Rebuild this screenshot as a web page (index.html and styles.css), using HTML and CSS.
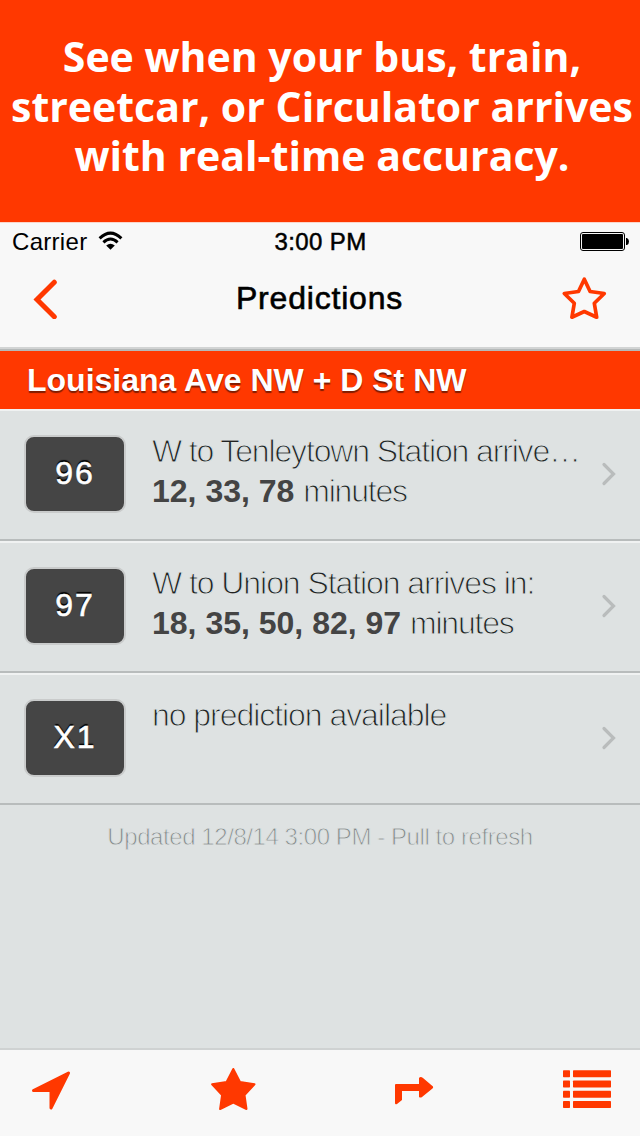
FILE: index.html
```html
<!DOCTYPE html>
<html lang="en">
<head>
<meta charset="utf-8">
<title>Predictions</title>
<link rel="stylesheet" href="styles.css">
</head>
<body>
<div class="screen">
  <header class="promo">See when your bus, train,<br>streetcar, or Circulator arrives<br>with real-time accuracy.</header>
  <div class="status">
    <div class="carrier"><span>Carrier</span>
      <svg width="26" height="20" viewBox="98 231 26 20"><g fill="none" stroke="#000" stroke-width="3"><path d="M99.600 238.300Q110.500 227.900 121.400 238.300"/><path d="M103.400 242.300Q110.500 235.700 117.600 242.300"/></g><path d="M106.200 245.500Q110.500 241.900 114.800 245.500L110.500 249.800Z"/></svg>
    </div>
    <div class="time">3:00 PM</div>
    <svg class="battery" width="50" height="20" viewBox="579 231 50 20"><rect x="580.500" y="232.500" width="44" height="18" rx="2.500" fill="none" stroke="#000"/><rect x="582" y="234" width="41" height="15" rx="1"/><path d="M626 238h1q2 1 2 3.500t-2 3.500h-1z"/></svg>
  </div>
  <nav class="nav">
    <svg width="24" height="40" viewBox="33 279 24 40"><path d="M54.300 282.200L37 299.500L54.300 316.800" fill="none" stroke="#ff3800" stroke-width="5" stroke-linecap="round"/></svg>
    <h1>Predictions</h1>
    <svg class="outline-star" width="46" height="46" viewBox="561 275 46 46"><path d="M584.300 279.200L590.100 291.500L604.300 293.500L594.300 303.300L596.700 317.200L584.300 311.500L571.900 317.200L574.300 303.300L564.300 293.500L578.500 291.500Z" fill="none" stroke="#ff3800" stroke-width="3.700" stroke-linejoin="round"/></svg>
  </nav>
  <h2 class="stop">Louisiana Ave NW + D St NW</h2>
  <main class="list">
    <section class="row">
      <div class="badge">96</div>
      <div class="info"><p class="thin first">W to Tenleytown Station arrive…</p><p><b>12, 33, 78</b> <span class="thin minutes">minutes</span></p></div>
      <svg class="chevron" width="16" height="24" viewBox="0 0 16 24"><path d="M3 2.500L12.500 12L3 21.500"/></svg>
    </section>
    <section class="row">
      <div class="badge">97</div>
      <div class="info"><p class="thin second">W to Union Station arrives in:</p><p><b>18, 35, 50, 82, 97</b> <span class="thin minutes">minutes</span></p></div>
      <svg class="chevron" width="16" height="24" viewBox="0 0 16 24"><path d="M3 2.500L12.500 12L3 21.500"/></svg>
    </section>
    <section class="row">
      <div class="badge">X1</div>
      <div class="info"><p class="thin third">no prediction available</p></div>
      <svg class="chevron" width="16" height="24" viewBox="0 0 16 24"><path d="M3 2.500L12.500 12L3 21.500"/></svg>
    </section>
    <p class="updated">Updated 12/8/14 3:00 PM - Pull to refresh</p>
  </main>
  <footer class="tabs">
    <svg width="40" height="40" viewBox="31 1072 40 40"><path d="M33.500 1092.500L68.500 1075L51 1110V1092.500Z" fill="#ff3800" stroke="#ff3800" stroke-width="3" stroke-linejoin="round"/></svg>
    <svg class="favorite" width="46" height="46" viewBox="210 1066 46 46"><path d="M233.300 1069L240 1082L254.500 1084.300L244.500 1095L246.500 1109L233.300 1102.600L220.100 1109L222.100 1095L212.100 1084.300L226.600 1082Z" fill="#ff3800" stroke="#ff3800" stroke-width="2" stroke-linejoin="round"/></svg>
    <svg class="directions" width="40" height="30" viewBox="394 1076 40 30"><path d="M396 1084H419V1078Q420.500 1076 423 1078L433 1086.500Q433.500 1087.500 432.500 1088.500L422 1097Q420.500 1098 419 1097V1091H402V1100L397 1104Q395 1105 395 1103V1085Q395 1084 396 1084Z" fill="#ff3800"/></svg>
    <svg class="menu" width="48" height="38" viewBox="563 1070 48 38"><g fill="#ff3800"><rect x="563" y="1070.200" width="7" height="7" rx=".7"/><rect x="573" y="1070.200" width="38" height="7" rx=".7"/><rect x="563" y="1080.500" width="7" height="7" rx=".7"/><rect x="573" y="1080.500" width="38" height="7" rx=".7"/><rect x="563" y="1090.800" width="7" height="7" rx=".7"/><rect x="573" y="1090.800" width="38" height="7" rx=".7"/><rect x="563" y="1101" width="7" height="7" rx=".7"/><rect x="573" y="1101" width="38" height="7" rx=".7"/></g></svg>
  </footer>
</div>
</body>
</html>
```
FILE: styles.css
```css
* { box-sizing: border-box; margin: 0; }
svg { display: block; flex: none; }
body { font-family: "Liberation Sans", Arial, sans-serif; color: #000; }
.screen { width: 640px; height: 1136px; display: flex; flex-direction: column; background: #dee2e2; overflow: hidden; white-space: nowrap; }
.promo { height: 222px; padding: 32px 0 0 4px; background: #ff3800; color: #fff; font: bold 41px/49.5px "Open Sans", sans-serif; text-align: center; }
.status { height: 38px; padding: 0 11px 0 12px; display: grid; grid-template-columns: 1fr auto 1fr; align-items: center; background: #f8f8f8; border-top: 1px solid #fbd5ca; font-size: 24px; line-height: 34px; }
.carrier { display: flex; align-items: center; gap: 11px; letter-spacing: .3px; }
.carrier svg { margin-top: -2px; }
.time { letter-spacing: .4px; -webkit-text-stroke: .5px #000; }
.battery { justify-self: end; margin-top: -2px; }
.nav { height: 89px; padding: 0 33px 10px; display: flex; align-items: center; justify-content: space-between; background: #f8f8f8; border-bottom: 2px solid #d2d4d4; }
.nav h1 { font-size: 32px; font-weight: 400; letter-spacing: .8px; -webkit-text-stroke: .6px #000; padding-left: 21px; }
.outline-star { margin-top: -2px; }
.stop { height: 60px; background: #ff3800; border-top: 2px solid #b5b9b9; color: #fff; padding-left: 27px; font-size: 32px; line-height: 58px; text-shadow: 0 2px 1px rgba(0,0,0,.5); }
.list { flex: 1; }
.row { height: 132px; padding: 24px 23px 0 24px; display: flex; border-top: 2px solid #f0f2f2; border-bottom: 2px solid #b8bcbc; }
.badge { width: 102px; height: 78px; border: 2px solid #c9cbcb; border-radius: 10px; background: #454545; color: #fff; font-size: 32px; line-height: 72px; letter-spacing: 2px; text-align: center; -webkit-text-stroke: .6px #fff; text-shadow: 0 -2px 1px #000; }
.info { flex: 1; min-width: 0; padding-left: 26px; font-size: 32px; line-height: 40px; margin-top: -4px; color: #444; }
.thin { color: #222; -webkit-text-stroke: 1px #dee2e2; }
.first { letter-spacing: -1.15px; }
.second { letter-spacing: -1.07px; }
.third { letter-spacing: -1.05px; }
.minutes { letter-spacing: -1.2px; }
.chevron { margin-top: 27px; fill: none; stroke: #b9bcbc; stroke-width: 3.2; stroke-linecap: round; }
.updated { padding-top: 16px; text-align: center; font-size: 24px; line-height: 32px; letter-spacing: -.43px; color: #858989; -webkit-text-stroke: .8px #dee2e2; }
.tabs { height: 88px; padding: 0 29px 6px 31px; display: flex; align-items: center; background: #f8f8f8; border-top: 2px solid #cfd2d2; }
.favorite { margin: -3px 0 0 139px; }
.directions { margin: 1px 0 0 138px; }
.menu { margin: -3px 0 0 auto; }
```
